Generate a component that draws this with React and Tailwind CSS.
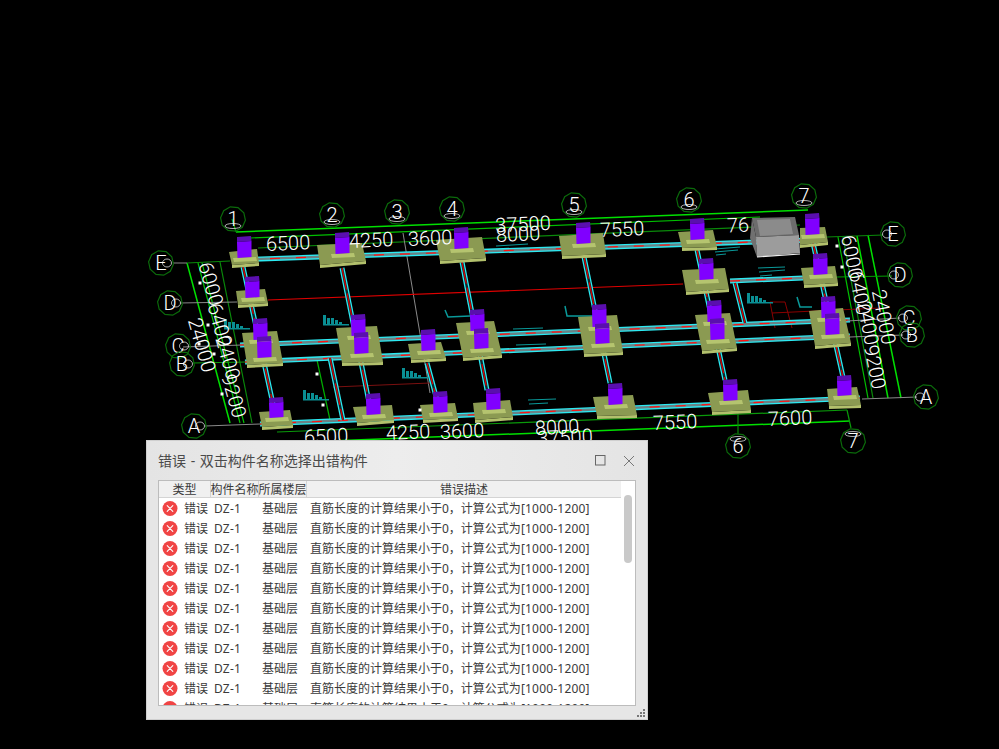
import React from "react";

const CJK = { fontFamily: '"Noto Sans", "Noto Sans CJK SC", sans-serif' };

// [tl, tr, br, bl] corners of each footing top face
const footings = [
  [229, 252, 257, 249, 259, 263, 232, 265],
  [317, 245, 362, 243, 366, 261, 320, 265],
  [436, 240, 482, 237, 486, 258, 440, 261],
  [559, 236, 603, 233, 606, 254, 562, 256],
  [678, 232, 713, 230, 717, 247, 682, 248],
  [800, 228, 825, 227, 828, 242, 800, 245],
  [236, 291, 265, 289, 268, 303, 238, 305],
  [682, 270, 725, 268, 729, 289, 686, 292],
  [801, 268, 835, 266, 838, 283, 804, 285],
  [242, 333, 277, 331, 283, 363, 247, 365],
  [336, 328, 377, 326, 383, 362, 342, 363],
  [408, 344, 441, 342, 446, 358, 411, 360],
  [456, 323, 494, 321, 502, 355, 463, 358],
  [578, 317, 617, 315, 623, 352, 584, 354],
  [695, 315, 730, 313, 737, 348, 702, 351],
  [809, 311, 843, 308, 851, 343, 815, 346],
  [259, 412, 290, 410, 293, 425, 262, 427],
  [353, 407, 392, 405, 394, 420, 357, 423],
  [420, 405, 455, 403, 458, 418, 423, 420],
  [473, 403, 510, 400, 513, 417, 475, 420],
  [593, 397, 633, 395, 637, 415, 597, 416],
  [708, 393, 748, 390, 751, 410, 712, 412],
  [827, 389, 857, 387, 861, 405, 829, 406],
];

// x, top, bottom of the purple columns
const pedestals = [
  [812, 213, 234], [697, 218, 239], [583, 222, 243], [461, 227, 248], [342, 232, 253], [244, 236, 257],
  [820, 253, 274], [706, 258, 279], [252, 276, 297],
  [828, 296, 317], [714, 300, 321], [599, 304, 326], [477, 309, 330], [358, 314, 335], [260, 318, 339],
  [832, 313, 334], [717, 318, 339], [602, 323, 343], [481, 328, 348], [428, 329, 350], [361, 332, 353], [264, 336, 357],
  [844, 375, 395], [730, 379, 400], [615, 383, 404], [493, 388, 409], [440, 391, 412], [373, 393, 414], [276, 397, 417],
];

const rowBeams = [
  [244, 259.5, 812, 240],
  [730, 281, 803, 278],
  [240, 345, 850, 320],
  [245, 362, 850, 336],
  [260, 424, 860, 398],
];

const colBeams = [
  [243, 267, 275, 413],
  [342, 268, 370, 407],
  [462, 262, 487, 390],
  [584, 257, 610, 383],
  [697, 250, 725, 380],
  [813, 243, 843, 377],
  [427, 363, 437, 400],
  [330, 358, 343, 420],
  [735, 283, 745, 323],
];

const greenLines = [
  [236, 232, 808, 210, "#00e000", 1.5],
  [250, 238, 760, 217, "#00c000", 1.2],
  [258, 248, 800, 225, "#0a8a0a", 1.2],
  [277, 432, 847, 410, "#0a9a0a", 1.2],
  [277, 443, 850, 421, "#00e000", 1.5],
  [187, 263, 230, 423, "#00e000", 1.5],
  [198, 263, 240, 423, "#00c000", 1.2],
  [202, 263, 244, 423, "#00c000", 1.2],
  [220, 262, 252, 423, "#0a8a0a", 1.2],
  [838, 237, 868, 398, "#00c000", 1.2],
  [843, 237, 873, 398, "#0a8a0a", 1.2],
  [857, 236, 888, 398, "#00e000", 1.5],
  [868, 235, 901, 398, "#00e000", 1.5],
  [187, 263, 230, 261, "#0a8a0a", 1.2],
  [193, 363, 247, 362, "#0a9a0a", 1.2],
  [827, 237, 883, 235, "#0a8a0a", 1.2],
  [837, 277, 892, 276, "#00a000", 1.2],
  [317, 360, 330, 420, "#00b000", 1.2],
  [232, 219, 236, 232, "#00a000", 1.2],
  [738, 412, 738, 434, "#0a8a0a", 1.2],
  [847, 410, 851, 428, "#0a9a0a", 1.2],
];

const greyLines = [
  [173, 263, 187, 263],
  [180, 303, 237, 302],
  [183, 347, 242, 345],
  [862, 399, 917, 397],
  [205, 426, 260, 424],
  [847, 321, 900, 318],
  [850, 337, 903, 335],
  [403, 233, 430, 393],
];

const bubbles = [
  ["1", 233, 219, "b"], ["2", 332, 215, "b"], ["3", 397, 212, "b"], ["4", 452, 209, "b"],
  ["5", 574, 205, "b"], ["6", 689, 200, "b"], ["7", 804, 196, "b"],
  ["6", 738, 446, "t"], ["7", 853, 441, "t"],
  ["E", 161, 263, "r"], ["D", 170, 303, "r"], ["C", 178, 346, "r"], ["B", 182, 364, "r"], ["A", 194, 426, "r"],
  ["E", 893, 234, "l"], ["D", 900, 275, "l"], ["C", 909, 318, "l"], ["B", 912, 335, "l"], ["A", 926, 397, "l"],
];

const dims = [
  ["6500", 288, 243, -2.4], ["4250", 371, 240, -2.4], ["3600", 430, 238, -2.4], ["37500", 523, 224, -2.4],
  ["8000", 518, 234, -2.4], ["7550", 622, 229, -2.4], ["76", 738, 225, -2.4],
  ["6500", 326, 436, -2.4], ["4250", 408, 432, -2.4], ["3600", 462, 431, -2.4], ["8000", 557, 427, -2.4],
  ["37500", 565, 437, -2.4], ["7550", 675, 422, -2.4], ["7600", 790, 418, -2.4],
  ["6000", 211, 284, 74], ["6400", 220, 325, 74], ["2400", 228, 358, 74], ["9200", 234, 396, 74], ["24000", 202, 345, 74],
  ["6000", 852, 257, 79], ["6400", 860, 293, 79], ["2400", 868, 323, 79], ["9200", 875, 367, 79], ["24000", 884, 317, 79],
];

const hist = [[224, 319], [323, 315], [402, 368], [303, 390], [747, 293]];
const dots = [[200, 283], [208, 325], [199, 344], [214, 354], [222, 394], [317, 374], [323, 405], [420, 410], [837, 246], [842, 267]];

function Beam({ b, vertical }) {
  const [x1, y1, x2, y2] = b;
  const p = { x1, y1, x2, y2 };
  return (
    <g>
      <line {...p} stroke="#2ceaf2" strokeWidth="5" />
      <line {...p} stroke={vertical ? "#12262a" : "#6a8286"} strokeWidth="2.4" />
      <line {...p} stroke={vertical ? "#e00000" : "#ff1010"} strokeWidth="1.2" strokeDasharray={vertical ? "22 4" : "10 16"} />
    </g>
  );
}

function Footing({ f }) {
  const [a, b, c, d, e, g, h, i] = f;
  return (
    <g>
      <polygon points={`${h},${i} ${e},${g} ${e},${g + 3} ${h},${i + 3}`} fill="#b2c06c" />
      <polygon points={`${a},${b} ${c},${d} ${e},${g} ${h},${i}`} fill="#8b9a52" />
    </g>
  );
}

function Pedestal({ p }) {
  const [x, t, b] = p;
  return (
    <g>
      <polygon points={`${x - 11},${b + 1} ${x + 12},${b} ${x + 13},${b + 4} ${x - 10},${b + 5}`} fill="#b5c46f" />
      <polygon points={`${x - 7},${t + 1} ${x + 7},${t} ${x + 7.5},${t + 5} ${x - 7},${t + 6}`} fill="#5a0fae" />
      <polygon points={`${x - 7},${t + 6} ${x + 7.5},${t + 5} ${x + 7.5},${b} ${x - 6.5},${b + 1}`} fill="#8000ff" />
    </g>
  );
}

function Bubble({ b }) {
  const [label, x, y, side] = b;
  const pts = Array.from({ length: 10 }, (_, k) => {
    const a = (Math.PI * 2 * k) / 10 + 0.1;
    return `${(x + Math.cos(a) * 12.5).toFixed(1)},${(y + Math.sin(a) * 12.5).toFixed(1)}`;
  }).join(" ");
  const off = { b: [0, 7, 8, 2.5], t: [0, -7, 8, 2.5], r: [6, 0, 4.5, 4], l: [-6, 0, 4.5, 4] }[side];
  return (
    <g>
      <polygon points={pts} fill="none" stroke="#0b6b0b" strokeWidth="1.2" />
      <ellipse cx={x + off[0]} cy={y + off[1]} rx={off[2]} ry={off[3]} fill="none" stroke="#ddd" strokeWidth="0.8" />
      <text x={x} y={y + 7} textAnchor="middle" fontSize="20" fontWeight="300" fill="#fff" fontFamily='"Roboto", "Liberation Sans", sans-serif'>
        {label}
      </text>
    </g>
  );
}

function Hist({ x, y }) {
  return (
    <g fill="#0a8f94">
      <rect x={x} y={y} width="3" height="10" />
      <rect x={x + 4} y={y + 3} width="3" height="7" />
      <rect x={x + 8} y={y + 3} width="3" height="7" />
      <rect x={x + 12} y={y + 5} width="3" height="5" />
      <rect x={x + 16} y={y + 7} width="3" height="3" />
      <rect x={x} y={y + 9} width="26" height="1.5" />
    </g>
  );
}

function CadView() {
  return (
    <svg viewBox="0 0 999 749" className="block w-[999px] h-[749px]">
      {greenLines.map(([x1, y1, x2, y2, c, w], i) => (
        <line key={i} x1={x1} y1={y1} x2={x2} y2={y2} stroke={c} strokeWidth={w} />
      ))}
      {greyLines.map(([x1, y1, x2, y2], i) => (
        <line key={i} x1={x1} y1={y1} x2={x2} y2={y2} stroke="#8a8a8a" strokeWidth="1" />
      ))}
      <line x1="268" y1="300" x2="683" y2="284" stroke="#e00000" strokeWidth="1.2" />
      <line x1="333" y1="387" x2="430" y2="383" stroke="#7a1010" strokeWidth="1" />
      <path d="M770 302 L785 302 L792 328 M775 328 L770 302 M772 313 L880 308" fill="none" stroke="#8a0000" strokeWidth="1" />
      <path d="M445 310 L448 317 L470 316 M565 306 L567 316 L593 316 M797 297 L800 307 L812 307" fill="none" stroke="#0a9a9a" strokeWidth="1.5" />
      <path d="M715 249 L740 247 M715 252 L738 250 M716 255 L726 254 M758 268 L785 267 M759 272 L785 270 M760 276 L772 275 M496 246 L528 244 M513 329 L543 328 M516 345 L546 344 M528 400 L556 399 M529 404 L548 403" fill="none" stroke="#0a9a9a" strokeWidth="1" />
      {rowBeams.map((b, i) => (
        <Beam key={i} b={b} />
      ))}
      {colBeams.map((b, i) => (
        <Beam key={i} b={b} vertical />
      ))}
      {footings.map((f, i) => (
        <Footing key={i} f={f} />
      ))}
      {hist.map(([x, y], i) => (
        <Hist key={i} x={x} y={y} />
      ))}
      {dots.map(([x, y], i) => (
        <rect key={i} x={x - 1.5} y={y - 1.5} width="3" height="3" fill="#fff" />
      ))}
      {pedestals.map((p, i) => (
        <Pedestal key={i} p={p} />
      ))}
      {dims.map(([t, x, y, r], i) => (
        <text
          key={i}
          x={x}
          y={y}
          transform={`rotate(${r} ${x} ${y})`}
          textAnchor="middle"
          dominantBaseline="central"
          fontSize="20"
          fontWeight="300"
          fill="#fff"
          fontFamily='"Roboto", "Liberation Sans", sans-serif'
        >
          {t}
        </text>
      ))}
      {bubbles.map((b, i) => (
        <Bubble key={i} b={b} />
      ))}
      {/* grey water tank */}
      <polygon points="752,218 795,217 799,235 756,237" fill="#6c6c6c" />
      <polygon points="757,220 790,219 793,234 760,236" fill="#8b8b8b" />
      <polygon points="752,218 756,237 757,257 750,238" fill="#707070" />
      <polygon points="756,237 799,235 800,253 757,257" fill="#9c9c9c" />
      <line x1="757" y1="257" x2="800" y2="254" stroke="#f0f0f0" strokeWidth="1.2" />
    </svg>
  );
}

function ErrorIcon() {
  return (
    <svg width="16" height="16" viewBox="0 0 16 16" className="shrink-0">
      <circle cx="8" cy="7.5" r="7.5" fill="#f04444" />
      <path d="M5.2 4.7 L10.8 10.3 M10.8 4.7 L5.2 10.3" stroke="#fff" strokeWidth="1.1" strokeLinecap="round" />
    </svg>
  );
}

function ErrorRow() {
  return (
    <div className="flex items-center h-5 shrink-0 text-[12px] text-[#3a3a3a] whitespace-nowrap">
      <div className="w-[25px] pl-[3px]">
        <ErrorIcon />
      </div>
      <div className="w-[30px]">错误</div>
      <div className="w-[48px] tracking-[0.2px]">DZ-1</div>
      <div className="w-[48px]">基础层</div>
      <div>
        直筋长度的计算结果小于0，计算公式为<span className="tracking-[0.2px]">[1000-1200]</span>
      </div>
    </div>
  );
}

function HeaderCell({ className, children }) {
  return (
    <div className={`flex items-center justify-center h-full pt-px border-r border-[#d4d4d4] whitespace-nowrap ${className}`}>
      {children}
    </div>
  );
}

function ErrorDialog() {
  return (
    <div
      className="absolute left-[146px] top-[440px] w-[502px] h-[280px] bg-[#e6e6e6] border border-[#cfcfcf] flex flex-col"
      style={CJK}
    >
      <div className="flex items-center h-[39px] pl-[11px] shrink-0 bg-gradient-to-r from-[#e4e4e4] via-[#ededed] to-[#e4e4e4]">
        <span className="text-[14px] text-[#4a4a4a] [word-spacing:1px]">错误 - 双击构件名称选择出错构件</span>
        <div className="ml-auto flex items-center">
          <svg width="11" height="11" viewBox="0 0 11 11" className="mr-[17px]">
            <rect x="0.5" y="0.5" width="9.5" height="9.5" fill="none" stroke="#666" />
          </svg>
          <svg width="12" height="12" viewBox="0 0 12 12" className="mr-[12px]">
            <path d="M1 1 L11 11 M11 1 L1 11" stroke="#777" strokeWidth="1" />
          </svg>
        </div>
      </div>
      <div className="relative mx-[11px] h-[226px] bg-white border border-[#bcbcbc] overflow-hidden flex flex-col">
        <div className="flex h-[17px] w-[462px] shrink-0 items-center bg-[#f0f0f0] border-b border-[#d4d4d4] text-[12px] text-[#3a3a3a]">
          <HeaderCell className="w-[52px]">类型</HeaderCell>
          <HeaderCell className="w-[48px]">构件名称</HeaderCell>
          <HeaderCell className="w-[48px]">所属楼层</HeaderCell>
          <div className="flex-1 pt-px text-center">错误描述</div>
        </div>
        <div className="flex flex-col overflow-hidden pt-px">
          {Array.from({ length: 11 }, (_, i) => (
            <ErrorRow key={i} />
          ))}
        </div>
        <div className="absolute right-[3px] top-[14px] w-2 h-[68px] rounded bg-[#c9c9c9]" />
      </div>
      <div className="absolute right-[2px] bottom-[2px] grid grid-cols-3 gap-[1px]">
        {[0, 0, 1, 0, 1, 1, 1, 1, 1].map((on, i) => (
          <div key={i} className={`w-[2px] h-[2px] ${on ? "bg-[#777]" : ""}`} />
        ))}
      </div>
    </div>
  );
}

export default function App() {
  return (
    <div className="relative w-[999px] h-[749px] bg-black overflow-hidden">
      <CadView />
      <ErrorDialog />
    </div>
  );
}
